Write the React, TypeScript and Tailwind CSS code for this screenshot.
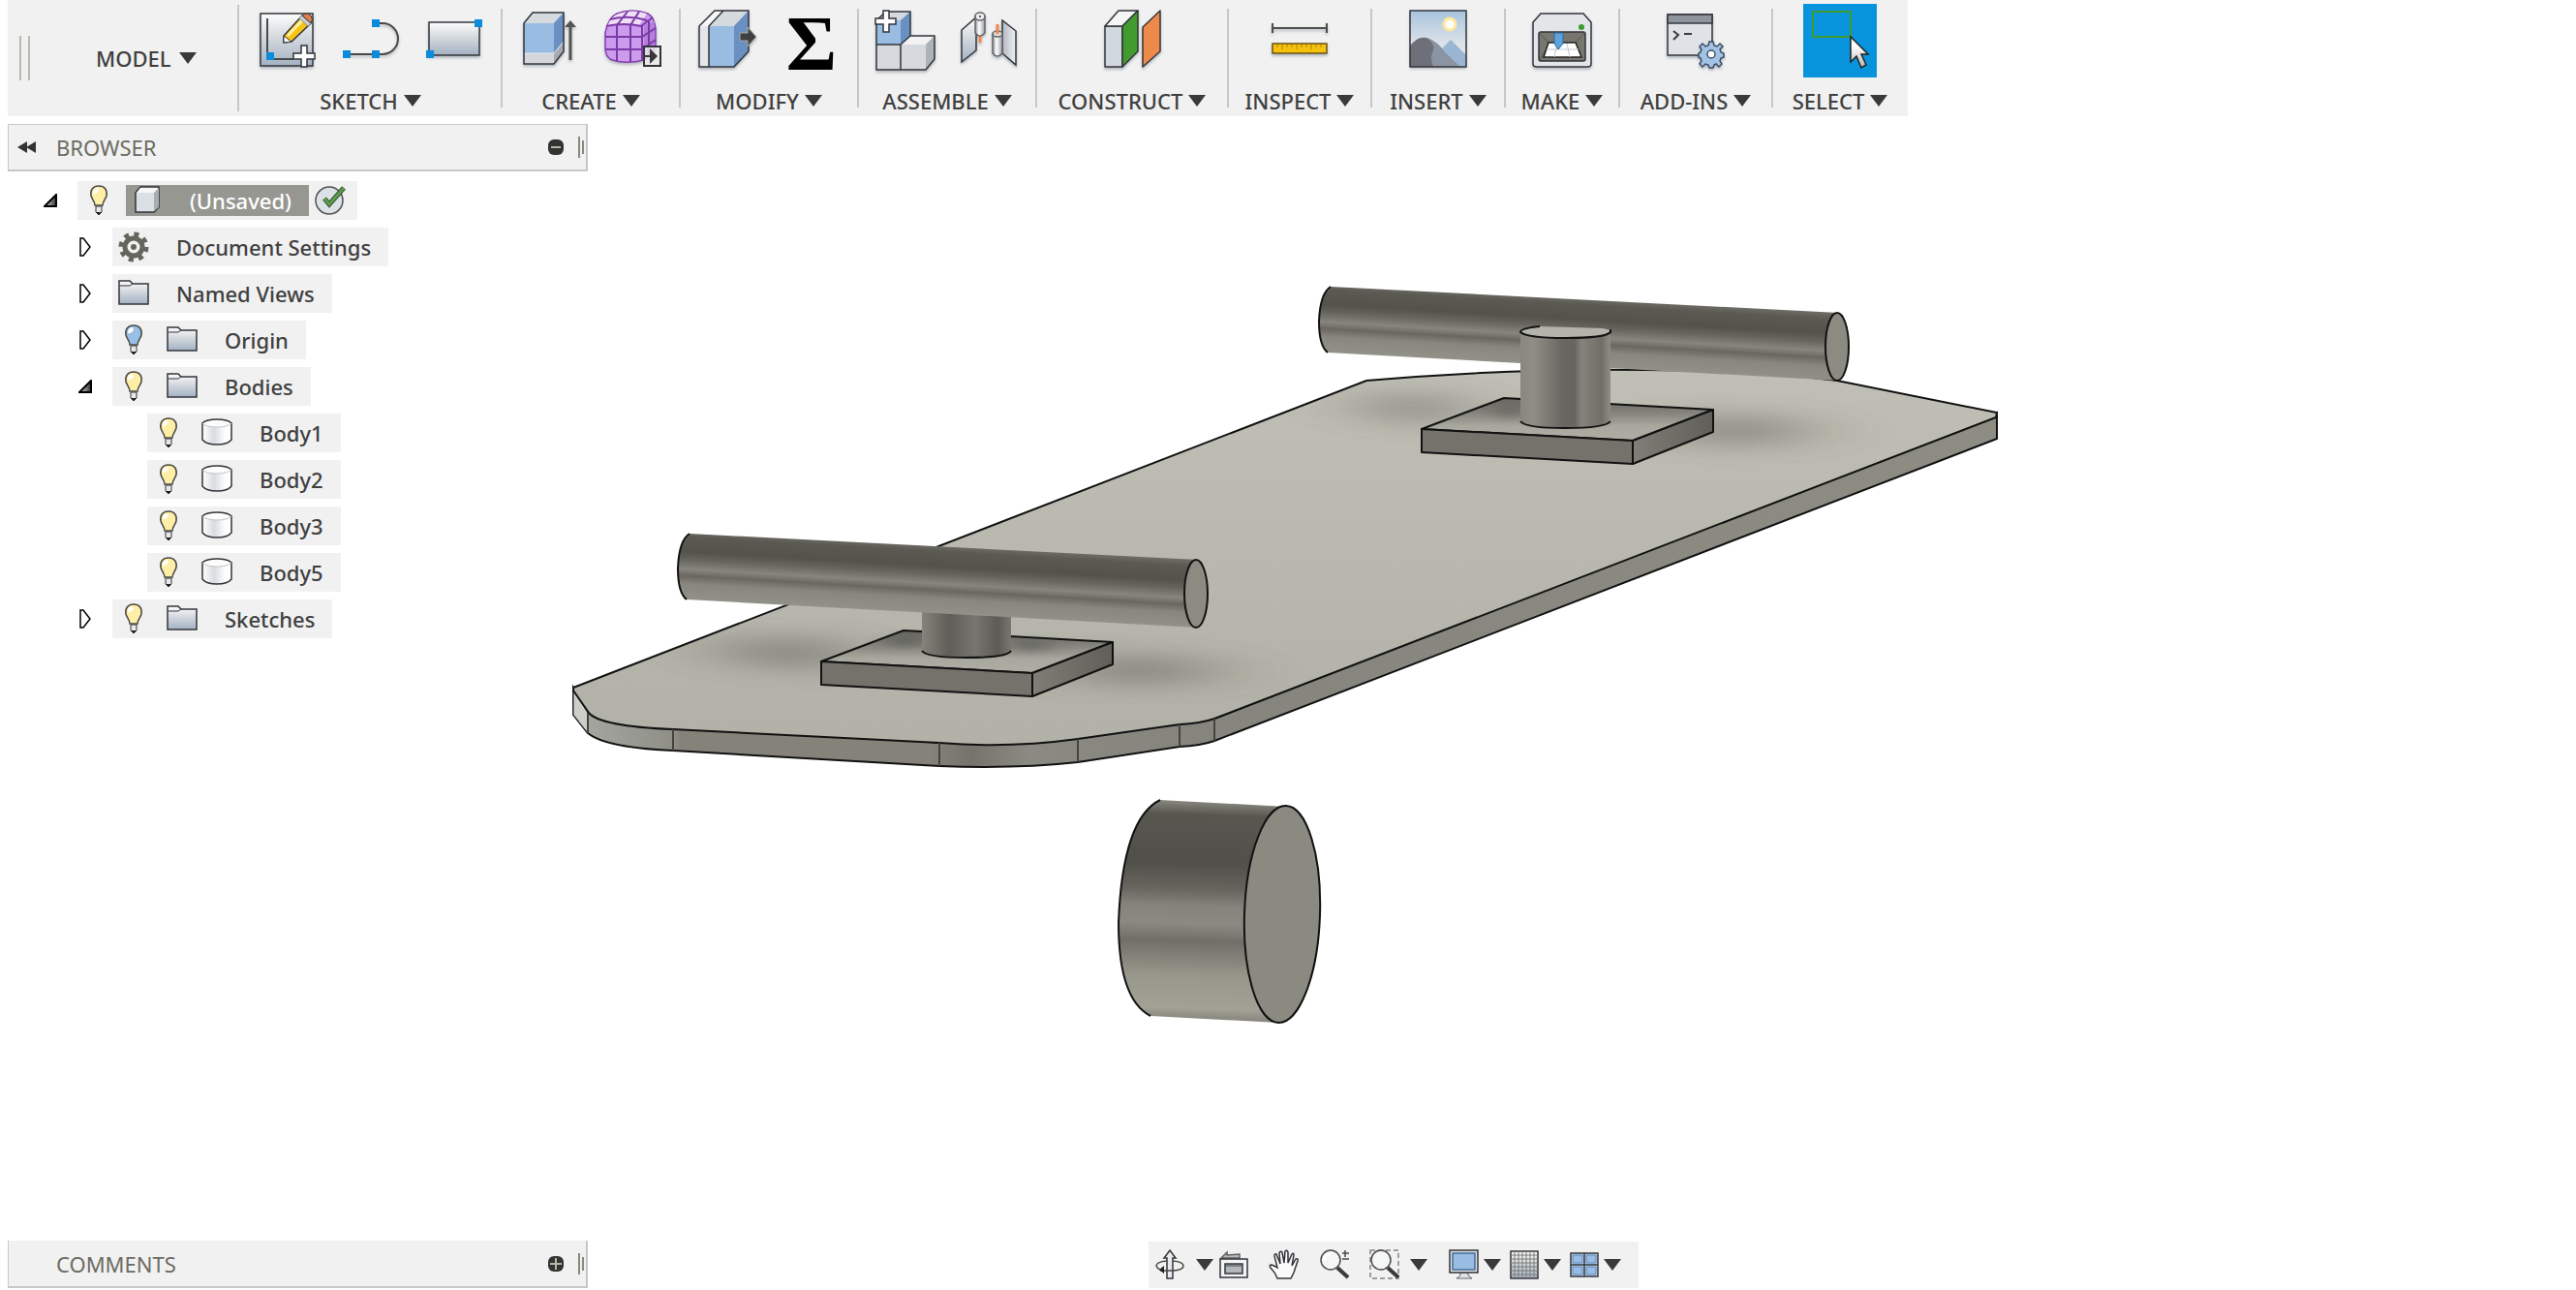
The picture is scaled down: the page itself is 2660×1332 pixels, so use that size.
import React from 'react';

type IconProps = { className?: string };

function Caret() {
  return (
    <svg viewBox="0 0 18 12" className="w-[18px] h-3 shrink-0" aria-hidden="true">
      <path d="M0 0H18L9 12Z" fill="#3a3a3a" />
    </svg>
  );
}

function Icon({ children }: { children: React.ReactNode }) {
  return (
    <svg viewBox="0 0 64 64" className="w-16 h-16 overflow-visible" aria-hidden="true">
      {children}
    </svg>
  );
}

function SmallIcon({ children, className = '' }: IconProps & { children: React.ReactNode }) {
  return (
    <svg viewBox="0 0 32 32" className={`w-8 h-8 shrink-0 ${className}`} aria-hidden="true">
      {children}
    </svg>
  );
}

const ink = '#33353a';

/* Toolbar icons */

function SketchIcon() {
  return (
    <Icon>
      <rect x="4" y="4" width="54" height="54" fill="url(#steel)" stroke={ink} strokeWidth="1.5" filter="url(#drop)" />
      <path d="M11 9V51H38" fill="none" stroke="#4a4a46" strokeWidth="2" />
      <rect x="10" y="44" width="8" height="8" fill="#0a8bdc" />
      <path d="M28 34V27L47 6L56 14L36 33Z" fill="#f6c415" stroke={ink} strokeWidth="1.5" />
      <path d="M32 27L48 10" stroke="#fff0a8" strokeWidth="3" />
      <path d="M28 34V27L36 33Z" fill="#fff" stroke={ink} />
      <path d="M44 9L53 17L56 14L47 6Z" fill="#c9cdd1" stroke="#8b8f94" />
      <path d="M47 6Q52 2 56 6Q59 10 56 14Z" fill="#e0804d" stroke={ink} />
      <path d="M46 37H52V45H60V51H52V59H46V51H38V45H46Z" fill="#fff" stroke={ink} strokeWidth="1.5" />
    </Icon>
  );
}

function LineIcon() {
  return (
    <Icon>
      <path d="M37 14H44A16 16 0 0 1 44 46H7" fill="none" stroke="#4a4a46" strokeWidth="2" filter="url(#drop)" />
      <rect x="33" y="10" width="8" height="8" fill="#0a8bdc" />
      <rect x="33" y="42" width="8" height="8" fill="#0a8bdc" />
      <rect x="3" y="42" width="8" height="8" fill="#0a8bdc" />
    </Icon>
  );
}

function RectangleIcon() {
  return (
    <Icon>
      <rect x="6" y="13" width="52" height="34" fill="url(#steel)" stroke={ink} strokeWidth="1.5" filter="url(#drop)" />
      <rect x="53" y="10" width="8" height="8" fill="#0a8bdc" />
      <rect x="3" y="42" width="8" height="8" fill="#0a8bdc" />
    </Icon>
  );
}

function ExtrudeIcon() {
  return (
    <Icon>
      <g filter="url(#drop)">
        <path d="M6 14L15 3H47L37 14Z" fill="#d4dade" />
        <rect x="6" y="14" width="31" height="31" fill="#98bce2" />
        <rect x="6" y="45" width="31" height="11" fill="#d3d7dc" />
        <path d="M37 14L47 3V33L37 45Z" fill="#6990c0" />
        <path d="M37 45L47 33V43L37 56Z" fill="#a7abb1" />
        <path d="M6 45H37L47 33" fill="none" stroke="#e8ebee" />
        <path d="M6 14L15 3H47V43L37 56H6Z" fill="none" stroke={ink} strokeWidth="1.5" />
        <path d="M54 52V17" stroke="#55554f" strokeWidth="3" />
        <path d="M48 18L54 11L60 18Z" fill="#55554f" />
      </g>
    </Icon>
  );
}

function FormIcon() {
  return (
    <Icon>
      <path d="M4 24Q7 8 16 4Q32 -2 48 4Q55 8 56 20V38Q52 46 44 52Q24 57 9 51Q4 47 4 40Z" fill="#cc9bee" stroke="#8640ae" strokeWidth="1.5" filter="url(#drop)" />
      <path d="M6 18Q9 7 18 4Q32 -1 47 4L39 16Q20 14 6 18Z" fill="#efe0f8" />
      <path d="M44 16L55 12V38L44 51Z" fill="#b67fdc" />
      <path d="M5 17Q24 13 41 17L53 8M4 28H42L56 19M4 41H42L56 31M16 53V16L27 2M30 54V16L39 2M42 52V17M49 47V12M9 10Q28 5 47 11" fill="none" stroke="#7b3aa5" strokeWidth="2" />
      <rect x="44" y="38" width="17" height="20" fill="#e9e7ea" fillOpacity="0.85" stroke={ink} strokeWidth="2" />
      <path d="M43 48H52" stroke="#383838" strokeWidth="2" />
      <path d="M50 40L58 48L50 56Z" fill="#383838" />
    </Icon>
  );
}

function PressPullIcon() {
  return (
    <Icon>
      <g filter="url(#drop)">
        <path d="M3 17L19 1H54L39 17Z" fill="#d4dade" />
        <path d="M3 17L19 1H29L13 17Z" fill="#f7f7f7" />
        <rect x="3" y="17" width="11" height="42" fill="#e4e7ea" />
        <rect x="13" y="17" width="26" height="42" fill="#98bce2" />
        <path d="M39 17L54 1V43L39 59Z" fill="#6990c0" />
        <path d="M13 59V17L28 1M3 17L19 1H54V43L39 59H3Z" fill="none" stroke={ink} strokeWidth="1.5" />
        <path d="M45 24H53V18L62 28L53 38V32H45Z" fill="#404040" stroke="#aaa9a0" strokeWidth="1" />
      </g>
    </Icon>
  );
}

function SigmaIcon() {
  return (
    <Icon>
      <text x="33" y="62" textAnchor="middle" className="font-['Liberation_Serif',serif] text-[80px] font-bold" fill="#000">
        Σ
      </text>
    </Icon>
  );
}

function ComponentIcon() {
  return (
    <Icon>
      <g filter="url(#drop)">
        <rect x="2" y="11" width="25" height="25" fill="#98bce2" />
        <path d="M2 11L12 2H37L27 11Z" fill="#d4dade" />
        <path d="M27 11L37 2V27L27 36Z" fill="#6990c0" />
        <rect x="2" y="36" width="51" height="26" fill="#d6d9de" />
        <path d="M27 36L37 27H62L53 36Z" fill="#f2f2f2" />
        <path d="M53 36L62 27V51L53 62Z" fill="#aeb3b9" />
        <path d="M2 11L12 2H37V27H62V51L53 62H2ZM2 36H27L37 27M27 36V62" fill="none" stroke={ink} strokeWidth="1.5" />
      </g>
      <path d="M9 1H15V9H22V15H15V23H9V15H1V9H9Z" fill="#fff" stroke={ink} strokeWidth="1.5" />
    </Icon>
  );
}

function JointIcon() {
  return (
    <Icon>
      <g filter="url(#drop)" stroke={ink} strokeWidth="1.5">
        <path d="M4 21L19 8V42L4 54Z" fill="url(#steel)" />
        <path d="M60 22L46 11V45L60 57Z" fill="url(#steelSide)" />
        <path d="M23 26V34" stroke="#f08a4b" strokeWidth="3" />
        <path d="M18 7V24Q23 30 28 24V7Z" fill="url(#tube)" stroke="#65676b" />
        <ellipse cx="23" cy="7" rx="5" ry="4" fill="#eee" stroke="#65676b" />
        <path d="M36 25V45Q41 51 46 45V25Z" fill="url(#tube)" stroke="#65676b" />
        <ellipse cx="41" cy="25" rx="5" ry="3" fill="#ddd" stroke="#65676b" />
        <path d="M41 15V25" stroke="#f08a4b" strokeWidth="3" />
      </g>
      <circle cx="23" cy="7" r="1" fill="#333" />
    </Icon>
  );
}

function PlaneIcon() {
  return (
    <Icon>
      <g filter="url(#drop)" strokeWidth="1.5" stroke={ink} strokeLinejoin="round">
        <rect x="4" y="17" width="18" height="42" fill="#d2d8df" />
        <path d="M4 17L18 1H38L22 17Z" fill="#f5f5f5" />
        <path d="M22 17L38 1V43L22 59Z" fill="#439b2e" />
        <path d="M43 18L61 1V43L43 59Z" fill="#ee8a4a" />
      </g>
    </Icon>
  );
}

function MeasureIcon() {
  return (
    <Icon>
      <g filter="url(#drop)">
        <path d="M4 19H60M4 14V24M60 14V24" stroke="#4d4d49" strokeWidth="2" />
        <rect x="4" y="35" width="56" height="10" fill="#f5c211" stroke="#6b5410" strokeWidth="1.5" />
      </g>
      <path d="M9 36V39M14 36V41M19 36V39M24 36V39M29 36V41M34 36V39M39 36V39M44 36V41M49 36V39M54 36V39" stroke="#a88212" />
    </Icon>
  );
}

function ImageIcon() {
  return (
    <Icon>
      <rect x="3" y="1" width="58" height="58" fill="url(#sky)" filter="url(#drop)" />
      <circle cx="44" cy="15" r="6" fill="#fff" stroke="#ffe89a" strokeWidth="3" />
      <path d="M34 42L45 31L61 47V59H40Z" fill="#9bb6d2" />
      <path d="M3 37Q12 27 21 29Q32 33 39 44L55 59H3Z" fill="#8b94a2" />
      <path d="M3 37Q12 27 19 29Q29 33 27 42Q23 49 27 59H3Z" fill="#6d7079" />
      <rect x="3" y="1" width="58" height="58" fill="none" stroke={ink} strokeWidth="1.5" />
    </Icon>
  );
}

function PrintIcon() {
  return (
    <Icon>
      <path d="M2 13L10 4H54L62 13V56Q62 59 58 59H6Q2 59 2 56Z" fill="#e3e6e8" stroke={ink} strokeWidth="1.5" filter="url(#drop)" />
      <rect x="8" y="23" width="48" height="30" rx="2" fill="#77776f" stroke={ink} strokeWidth="1.5" />
      <path d="M8 23L18 34V36L9 52M56 23L46 34" stroke="#55554f" fill="none" />
      <path d="M18 34H46L52 49H13Z" fill="#fff" stroke="#222" strokeWidth="1.5" />
      <path d="M16 41H49M27 35L24 49M37 35L40 49" stroke="#c6c9cc" />
      <path d="M24 24H33V35L28 41L24 35Z" fill="#5fa3dc" stroke="#2a6da8" />
      <circle cx="52" cy="18" r="3" fill="#3f9a2f" />
    </Icon>
  );
}

function ScriptIcon() {
  return (
    <Icon>
      <rect x="3" y="5" width="46" height="42" fill="#dfe3e7" stroke={ink} strokeWidth="1.5" filter="url(#drop)" />
      <rect x="3" y="5" width="46" height="9" fill="#8d949c" stroke={ink} strokeWidth="1.5" />
      <path d="M9 22L14 26L9 31M20 25H28" fill="none" stroke="#3c3c3c" strokeWidth="2" />
      <g stroke="#3d4d61" strokeWidth="1.5">
        <path
          d="M46 33H50L51 37L54 38L57 35L60 38L57 41L58 44L61 45V49L58 50L57 53L59 56L56 59L53 56L51 57L50 60H46L45 57L42 56L39 59L36 56L38 53L37 50L35 49V45L37 44L38 41L36 38L39 35L42 38L45 37Z"
          fill="#a3c3e6"
          filter="url(#drop)"
        />
        <circle cx="48" cy="46" r="4" fill="#fff" />
      </g>
    </Icon>
  );
}

function SelectIcon() {
  return (
    <svg viewBox="0 0 76 76" className="w-[76px] h-[76px] bg-[#0894dc]" aria-hidden="true">
      <rect x="10" y="8" width="39" height="26" fill="none" stroke="#3f9a2f" strokeWidth="2" />
      <path d="M49 34V60L55 54L60 66L65 63L60 52H67Z" fill="url(#cursor)" stroke="#222" strokeWidth="1.5" />
    </svg>
  );
}

/* Browser tree icons */

function Bulb({ off = false }: { off?: boolean }) {
  return (
    <SmallIcon>
      <path d="M13 22V28L16 31L19 28V22Z" fill="#e8e8e8" stroke={ink} strokeWidth="1" />
      <path d="M13 28H19L16 31Z" fill="#222" />
      <path
        d="M16 1C10 1 7 5 8 11C9 15 12 17 12 21H20C20 17 23 15 24 11C25 5 22 1 16 1Z"
        fill={off ? '#98bfe6' : '#ffeea6'}
        stroke="#4a4a46"
        strokeWidth="1.5"
      />
      <path d="M10 9Q10 3 15 3L16 6Q12 10 10 9Z" fill="#fff" />
    </SmallIcon>
  );
}

function Cube() {
  return (
    <SmallIcon>
      <path d="M4 8L9 2H28V23L23 28H4Z" fill="#dbe0e5" stroke={ink} strokeWidth="1.5" />
      <path d="M23 8L28 3V23L23 27Z" fill="#a6adb5" />
      <path d="M5 8L9 3H27L23 8Z" fill="#f7f7f7" />
    </SmallIcon>
  );
}

function Gear() {
  return (
    <SmallIcon>
      <circle cx="16" cy="16" r="13" fill="none" stroke="#65655e" strokeWidth="5" strokeDasharray="5 5.2" />
      <circle cx="16" cy="16" r="9" fill="none" stroke="#65655e" strokeWidth="5" />
      <circle cx="16" cy="16" r="3" fill="#65655e" />
    </SmallIcon>
  );
}

function Folder() {
  return (
    <SmallIcon>
      <path d="M1 3H12L15 6H31V27H1Z" fill="url(#steel)" stroke={ink} strokeWidth="1.5" />
      <path d="M2 8H12L15 6" fill="none" stroke={ink} strokeWidth="1" />
    </SmallIcon>
  );
}

function Cylinder() {
  return (
    <SmallIcon>
      <path d="M1 6V23Q5 28 16 28Q27 28 31 23V6Z" fill="url(#tubeWhite)" stroke={ink} strokeWidth="1.5" />
      <path d="M1 6Q5 2 16 2Q27 2 31 6Q27 10 16 10Q5 10 1 6Z" fill="#fcfcfc" />
      <path d="M1 6Q5 2 16 2Q27 2 31 6" fill="none" stroke={ink} strokeWidth="1.5" />
      <path d="M1 6Q5 10 16 10Q27 10 31 6" fill="none" stroke="#c3c6ca" />
    </SmallIcon>
  );
}

function CheckBadge() {
  return (
    <SmallIcon>
      <circle cx="15" cy="16" r="14" fill="#dde2e8" stroke="#50524f" strokeWidth="1.5" />
      <path d="M10 14L15 20L30 3" fill="none" stroke="#3b4a34" strokeWidth="5" />
      <path d="M10 14L15 20L30 3" fill="none" stroke="#5aa04c" strokeWidth="3" />
    </SmallIcon>
  );
}

const toolbar = [
  { label: 'SKETCH', width: 'w-[271px]', icons: [SketchIcon, LineIcon, RectangleIcon] },
  { label: 'CREATE', width: 'w-[184px]', icons: [ExtrudeIcon, FormIcon] },
  { label: 'MODIFY', width: 'w-[184px]', icons: [PressPullIcon, SigmaIcon] },
  { label: 'ASSEMBLE', width: 'w-[184px]', icons: [ComponentIcon, JointIcon] },
  { label: 'CONSTRUCT', width: 'w-[198px]', icons: [PlaneIcon] },
  { label: 'INSPECT', width: 'w-[148px]', icons: [MeasureIcon] },
  { label: 'INSERT', width: 'w-[138px]', icons: [ImageIcon] },
  { label: 'MAKE', width: 'w-[118px]', icons: [PrintIcon] },
  { label: 'ADD-INS', width: 'w-[158px]', icons: [ScriptIcon] },
  { label: 'SELECT', width: 'w-[140px]', icons: [SelectIcon] }
];

function Toolbar() {
  return (
    <header className="flex w-fit h-[120px] bg-[#f1f1f1] text-[#404040]">
      <div className="flex items-center w-[237px] pl-3">
        <div className="w-[11px] h-[46px] border-x-2 border-[#b9b9ac]" />
        <button className="flex items-center gap-2 ml-[68px]">
          MODEL <Caret />
        </button>
      </div>
      <div className="w-[2px] h-[110px] self-center bg-[#c6c7cb]" />
      {toolbar.map((group, index) => (
        <React.Fragment key={group.label}>
          {index > 0 && <div className="w-[2px] -mx-px h-[102px] self-center bg-[#c6c7cb]" />}
          <div className={`flex flex-col items-center pt-1 ${group.width}`}>
            <div className="flex items-center gap-[22px] h-[76px]">
              {group.icons.map((ToolIcon, i) => (
                <button key={i} aria-label={`${group.label} tool ${i + 1}`}>
                  <ToolIcon />
                </button>
              ))}
            </div>
            <button className="flex items-center gap-1.5 mt-2.5">
              {group.label} <Caret />
            </button>
          </div>
        </React.Fragment>
      ))}
    </header>
  );
}

function PanelHeader({ title, collapsed = false }: { title: string; collapsed?: boolean }) {
  return (
    <div
      className={`flex items-center w-[599px] h-[49px] pl-[9px] pr-0.5 bg-[#f1f1f1] text-[#6b6b62] border-l border-r-2 border-b-2 border-[#c6c7cb] ${
        collapsed ? '' : 'border-t'
      }`}
    >
      <div className="flex items-center w-10">
        {!collapsed && (
          <svg viewBox="0 0 20 12" className="w-5 h-3" aria-hidden="true">
            <path d="M0 6L10 0V12ZM9 6L19 0V12Z" fill="#333" />
          </svg>
        )}
      </div>
      <h2 className="font-normal">{title}</h2>
      <button className="ml-auto" aria-label={collapsed ? 'Expand' : 'Collapse'}>
        <svg viewBox="0 0 16 16" className="w-4 h-4">
          <rect width="16" height="16" rx="6" fill="#333330" />
          <path d={collapsed ? 'M2 8H14M8 2V14' : 'M3 8H13'} stroke="#b5b5a8" strokeWidth="2" />
        </svg>
      </button>
      <div className="flex items-center gap-0.5 ml-[15px]">
        <div className="w-[2px] h-[22px] bg-[#88887f]" />
        <div className="w-[2px] h-[14px] bg-[#88887f]" />
      </div>
    </div>
  );
}

function Expander({ open }: { open: boolean }) {
  return (
    <button className="w-9 h-10 flex items-center pl-px" aria-label={open ? 'Collapse' : 'Expand'}>
      {open ? (
        <svg viewBox="0 0 14 14" className="w-3.5 h-3.5">
          <path d="M1 13L13 1V13Z" fill="url(#wedge)" stroke="#000" strokeWidth="2" />
        </svg>
      ) : (
        <svg viewBox="0 0 14 20" className="w-3.5 h-5">
          <path d="M2 1H5L12 10L5 19H2Z" fill="#fff" stroke="#000" strokeWidth="1.5" />
        </svg>
      )}
    </button>
  );
}

type NodeProps = {
  label: string;
  open?: boolean;
  icons: React.ReactNode;
  children?: React.ReactNode;
};

function TreeNode({ label, open, icons, children }: NodeProps) {
  return (
    <li>
      <div className="flex">
        {open === undefined ? <div className="w-9" /> : <Expander open={open} />}
        <div className="flex items-center h-10 pl-1.5 pr-[18px] bg-[#f1f1f1]">
          <div className="flex gap-[18px] mr-7">{icons}</div>
          <span>{label}</span>
        </div>
      </div>
      {children}
    </li>
  );
}

function BrowserTree() {
  return (
    <ul className="mt-2.5 pl-9 text-[#404040]">
      <li>
        <div className="flex">
          <Expander open />
          <div className="flex items-center h-10 pl-1.5 pr-3 bg-[#f1f1f1]">
            <Bulb />
            <div className="flex items-center h-8 ml-3 mr-1.5 pl-1.5 pr-[18px] bg-[#979792] text-white">
              <Cube />
              <span className="ml-7">(Unsaved)</span>
            </div>
            <CheckBadge />
          </div>
        </div>
        <ul className="flex flex-col gap-2 mt-2 pl-9">
          <TreeNode label="Document Settings" open={false} icons={<Gear />} />
          <TreeNode label="Named Views" open={false} icons={<Folder />} />
          <TreeNode label="Origin" open={false} icons={<><Bulb off /><Folder /></>} />
          <TreeNode label="Bodies" open icons={<><Bulb /><Folder /></>}>
            <ul className="flex flex-col gap-2 mt-2 pl-9">
              {['Body1', 'Body2', 'Body3', 'Body5'].map((body) => (
                <TreeNode key={body} label={body} icons={<><Bulb /><Cylinder /></>} />
              ))}
            </ul>
          </TreeNode>
          <TreeNode label="Sketches" open={false} icons={<><Bulb /><Folder /></>} />
        </ul>
      </li>
    </ul>
  );
}

function NavigationBar() {
  return (
    <nav className="flex items-center h-12 pl-[7px] pr-[18px] bg-[#f1f1f1]">
      <button className="flex items-center gap-2.5" aria-label="Orbit">
        <SmallIcon>
          <path d="M12 30V9H9L15 1L21 9H18V30Z" fill="#e6eaed" stroke={ink} strokeWidth="1.5" />
          <path d="M18 12Q29 13 29 17Q29 22 15 22H5M12 12Q1 13 1 17Q2 20 5 21" fill="none" stroke="#4a4a46" strokeWidth="1.5" />
          <path d="M4 21L9 17V25Z" fill="#222" />
        </SmallIcon>
        <Caret />
      </button>
      <button className="ml-[5px]" aria-label="Look at">
        <SmallIcon>
          <path d="M3 9L9 3V6L22 5V9Z" fill="#b8bab9" stroke="#62625c" strokeWidth="1.5" />
          <rect x="2" y="10" width="28" height="19" fill="#f2f4f5" stroke={ink} strokeWidth="1.5" />
          <rect x="7" y="15" width="18" height="10" fill="#b2b8bd" stroke={ink} strokeWidth="1.5" />
          <path d="M8 17H24" stroke="#7d8186" strokeWidth="2" />
        </SmallIcon>
      </button>
      <button className="ml-5" aria-label="Pan">
        <SmallIcon>
          <path
            d="M9 30Q7 24 2 19Q0 16 3 16Q6 17 9 19L6 7Q6 4 8 5L12 15L11 4Q12 1 14 3L16 14L17 2Q19 0 20 3V14L24 5Q26 3 26 6L24 17L28 10Q31 9 30 12L26 24L23 30Z"
            fill="#fafafa"
            stroke={ink}
            strokeWidth="1.5"
          />
        </SmallIcon>
      </button>
      <button className="ml-5" aria-label="Zoom">
        <SmallIcon>
          <path d="M19 19L30 29" stroke="#3a3a3a" strokeWidth="4" />
          <circle cx="12" cy="11" r="10" fill="#f4f6f7" stroke="#4a4a46" strokeWidth="1.5" />
          <path d="M5 11Q6 5 12 5" fill="none" stroke="#fff" strokeWidth="3" />
          <path d="M24 4H31M27 1V8M24 10H31" stroke="#4a4a46" strokeWidth="1.5" />
        </SmallIcon>
      </button>
      <button className="flex items-center gap-2.5 ml-5" aria-label="Zoom window">
        <SmallIcon>
          <rect x="1" y="1" width="29" height="29" fill="none" stroke="#85857c" strokeWidth="1.5" strokeDasharray="5 3" />
          <path d="M19 19L30 29" stroke="#3a3a3a" strokeWidth="4" />
          <circle cx="12" cy="11" r="10" fill="#f4f6f7" stroke="#4a4a46" strokeWidth="1.5" />
        </SmallIcon>
        <Caret />
      </button>
      <button className="flex items-center gap-1 ml-[22px]" aria-label="Display settings">
        <SmallIcon>
          <path d="M12 24H20V27L24 30H8L12 27Z" fill="#dfe3e6" stroke="#62666a" />
          <rect x="1" y="1" width="29" height="23" fill="#dfe3e6" stroke={ink} strokeWidth="1.5" />
          <rect x="4" y="4" width="23" height="17" fill="#98bce2" stroke="#466a96" strokeWidth="1.5" />
        </SmallIcon>
        <Caret />
      </button>
      <button className="flex items-center gap-1 ml-2" aria-label="Grid and snaps">
        <SmallIcon>
          <rect x="2" y="2" width="28" height="28" fill="url(#steel)" stroke={ink} strokeWidth="1.5" />
          <path d="M6 2V30M10 2V30M14 2V30M18 2V30M22 2V30M26 2V30M2 6H30M2 10H30M2 14H30M2 18H30M2 22H30M2 26H30" stroke="#7b7b76" strokeWidth="1" />
        </SmallIcon>
        <Caret />
      </button>
      <button className="flex items-center gap-1 ml-2" aria-label="Viewports">
        <SmallIcon>
          <rect x="2" y="4" width="28" height="24" fill="#c8dcf1" stroke={ink} strokeWidth="1.5" />
          <path d="M4 6H14V14H4ZM18 6H28V14H18ZM4 18H14V26H4ZM18 18H28V26H18Z" fill="#98bce2" stroke="#5c88bb" />
          <path d="M16 4V28M2 16H30" stroke={ink} strokeWidth="1.5" />
        </SmallIcon>
        <Caret />
      </button>
    </nav>
  );
}

/* Model canvas */

const metalStops = (
  <>
    <stop offset="0" stopColor="#6b6a63" />
    <stop offset="0.08" stopColor="#5a5952" />
    <stop offset="0.3" stopColor="#53524b" />
    <stop offset="0.42" stopColor="#66655e" />
    <stop offset="0.56" stopColor="#87867e" />
    <stop offset="0.66" stopColor="#6a6761" />
    <stop offset="0.78" stopColor="#88867d" />
    <stop offset="1" stopColor="#929187" />
  </>
);

function Axle() {
  return (
    <g>
      <path d="M712 551L1237 578V648L709 619Q700 612 700 587Q701 558 712 551Z" fill="url(#axle)" />
      <path d="M712 551Q701 558 700 587Q700 612 709 619" fill="none" stroke="#111" strokeWidth="2" />
      <ellipse cx="1235" cy="613" rx="12" ry="35" fill="#8b8b82" stroke="#111" strokeWidth="2" />
    </g>
  );
}

function Plate() {
  return (
    <g stroke="#111" strokeWidth="2" strokeLinejoin="round">
      <path d="M848 683L933 651L1149 663L1066 695Z" fill="url(#plateTop)" />
      <path d="M848 683L1066 695V719L848 707Z" fill="#74726b" />
      <path d="M1066 695L1149 663V686L1066 719Z" fill="url(#plateSide)" />
    </g>
  );
}

function Scene() {
  return (
    <svg viewBox="0 0 2660 1332" preserveAspectRatio="xMinYMin meet" className="col-start-1 row-start-1 w-full" role="img" aria-label="Skateboard model">
      <defs>
        <linearGradient id="steel" x2="0" y2="1">
          <stop offset="0" stopColor="#fdfdfd" />
          <stop offset="0.4" stopColor="#d9dde2" />
          <stop offset="1" stopColor="#a3b1c3" />
        </linearGradient>
        <linearGradient id="steelSide">
          <stop offset="0" stopColor="#b2b8bf" />
          <stop offset="1" stopColor="#f0f2f4" />
        </linearGradient>
        <linearGradient id="tube">
          <stop offset="0" stopColor="#8e9399" />
          <stop offset="0.4" stopColor="#fff" />
          <stop offset="1" stopColor="#9b9fa4" />
        </linearGradient>
        <linearGradient id="tubeWhite">
          <stop offset="0" stopColor="#fff" />
          <stop offset="0.4" stopColor="#d7dce1" />
          <stop offset="0.8" stopColor="#fff" />
        </linearGradient>
        <linearGradient id="sky" x2="0" y2="1">
          <stop offset="0" stopColor="#a8c4df" />
          <stop offset="0.6" stopColor="#dde3e8" />
        </linearGradient>
        <linearGradient id="cursor" x2="0" y2="1">
          <stop offset="0.3" stopColor="#fff" />
          <stop offset="1" stopColor="#b5b5b5" />
        </linearGradient>
        <linearGradient id="wedge">
          <stop offset="0" stopColor="#ddd" />
          <stop offset="1" stopColor="#333" />
        </linearGradient>
        <filter id="drop" x="-20%" y="-20%" width="140%" height="150%">
          <feDropShadow dx="0" dy="2" stdDeviation="1.5" floodColor="#5b6b7a" floodOpacity="0.45" />
        </filter>
        <filter id="soft" x="-50%" y="-200%" width="200%" height="500%">
          <feGaussianBlur stdDeviation="44 13" />
        </filter>
        <filter id="softSmall" x="-50%" y="-100%" width="200%" height="300%">
          <feGaussianBlur stdDeviation="12 5" />
        </filter>
        <linearGradient id="board" gradientUnits="userSpaceOnUse" x1="1000" y1="380" x2="1000" y2="770">
          <stop offset="0" stopColor="#bfbfb5" />
          <stop offset="1" stopColor="#b1b1a7" />
        </linearGradient>
        <linearGradient id="rim" gradientUnits="userSpaceOnUse" x1="592" y1="0" x2="2062" y2="0">
          <stop offset="0.01" stopColor="#a5a59f" />
          <stop offset="0.07" stopColor="#8f8f88" />
          <stop offset="0.075" stopColor="#85827a" />
          <stop offset="0.25" stopColor="#85827a" />
          <stop offset="0.28" stopColor="#75736c" />
          <stop offset="0.32" stopColor="#8a8a83" />
          <stop offset="0.44" stopColor="#85857e" />
          <stop offset="1" stopColor="#8d8d83" />
        </linearGradient>
        <linearGradient id="axle" gradientUnits="userSpaceOnUse" x1="971" y1="564" x2="967" y2="633">
          {metalStops}
        </linearGradient>
        <linearGradient id="wheel" gradientUnits="userSpaceOnUse" x1="1250" y1="828" x2="1243" y2="1053">
          <stop offset="0" stopColor="#88877e" />
          <stop offset="0.06" stopColor="#57564f" />
          <stop offset="0.28" stopColor="#504f49" />
          <stop offset="0.4" stopColor="#65645d" />
          <stop offset="0.48" stopColor="#85837c" />
          <stop offset="0.56" stopColor="#8a8a82" />
          <stop offset="0.64" stopColor="#716e68" />
          <stop offset="0.8" stopColor="#98978b" />
          <stop offset="0.95" stopColor="#a3a195" />
          <stop offset="1" stopColor="#86857c" />
        </linearGradient>
        <linearGradient id="stem">
          <stop offset="0" stopColor="#88887f" />
          <stop offset="0.15" stopColor="#8f8e85" />
          <stop offset="0.45" stopColor="#6a6863" />
          <stop offset="0.6" stopColor="#66645e" />
          <stop offset="0.68" stopColor="#85837b" />
          <stop offset="0.9" stopColor="#706e67" />
          <stop offset="1" stopColor="#8f8e85" />
        </linearGradient>
        <linearGradient id="stemDark">
          <stop offset="0" stopColor="#85847b" />
          <stop offset="0.3" stopColor="#5f5e58" />
          <stop offset="0.6" stopColor="#77756e" />
          <stop offset="0.85" stopColor="#5b5a54" />
          <stop offset="1" stopColor="#77766f" />
        </linearGradient>
        <linearGradient id="plateTop" x2="0" y2="1">
          <stop offset="0" stopColor="#66655f" />
          <stop offset="0.35" stopColor="#85847c" />
          <stop offset="0.65" stopColor="#a7a79d" />
          <stop offset="1" stopColor="#aeaea4" />
        </linearGradient>
        <linearGradient id="plateSide">
          <stop offset="0" stopColor="#807e76" />
          <stop offset="1" stopColor="#5f5e58" />
        </linearGradient>
        <clipPath id="boardClip">
          <path d="M592 710L1411 393Q1560 380 1700 382Q1810 382 1897 393L2062 426L2061 431L1254 742Q1240 747 1218 748L1113 763Q1040 773 970 767L695 753Q620 750 608 736L592 713Z" />
        </clipPath>
      </defs>

      {/* Deck */}
      <path
        d="M592 710V738L607 757Q625 772 695 775L970 791Q1050 794 1113 787L1218 771Q1240 770 1254 765L2062 453V426L1254 742L1218 748L970 767L608 736Z"
        fill="url(#rim)"
        stroke="#111"
        strokeWidth="2"
      />
      <path d="M592 712V738L607 757V736Z" fill="#cfcfca" stroke="#333" />
      <path
        d="M592 710L1411 393Q1560 380 1700 382Q1810 382 1897 393L2062 426L2061 431L1254 742Q1240 747 1218 748L1113 763Q1040 773 970 767L695 753Q620 750 608 736L592 713Z"
        fill="url(#board)"
        stroke="#111"
        strokeWidth="2"
      />
      <path d="M607 736V757M695 753V775M970 767V791M1113 763V787M1218 748V771M1254 742V765" stroke="#44433e" strokeWidth="2" />
      <g clipPath="url(#boardClip)">
        <g filter="url(#soft)" fill="#5d5c56" opacity="0.8">
          <path d="M720 664L870 664L870 690L760 678Z" />
          <path d="M1120 678L1270 690L1240 700L1110 702Z" />
          <path d="M1400 412L1500 412L1500 436L1420 426Z" />
          <path d="M1740 430L1880 442L1850 452L1740 456Z" />
        </g>
      </g>

      {/* Rear truck */}
      <g transform="translate(662 -255)">
        <Axle />
      </g>
      <g transform="translate(620 -240)">
        <Plate />
      </g>
      <ellipse cx="1560" cy="425" rx="16" ry="5" fill="#4b4a46" opacity="0.6" filter="url(#softSmall)" />
      <path d="M1570 342V435Q1575 442 1616 442Q1658 442 1663 435V342Z" fill="url(#stem)" />
      <path d="M1570 435Q1575 442 1616 442Q1658 442 1663 435" fill="none" stroke="#111" strokeWidth="2" />
      <path d="M1590 337L1570 341Q1575 349 1616 349Q1658 349 1663 341L1655 339Z" fill="#b3b3a9" />
      <path d="M1590 337Q1570 339 1570 343Q1577 349 1616 349Q1658 349 1663 343V340" fill="none" stroke="#111" strokeWidth="2" />

      {/* Front truck */}
      <Plate />
      <g fill="#3c3d40" opacity="0.6" filter="url(#softSmall)">
        <ellipse cx="935" cy="663" rx="20" ry="4" />
        <ellipse cx="1065" cy="667" rx="22" ry="4" />
      </g>
      <path d="M952 620V672Q957 679 998 679Q1040 679 1044 672V620Z" fill="url(#stemDark)" />
      <path d="M952 672Q957 679 998 679Q1040 679 1044 672" fill="none" stroke="#111" strokeWidth="2" />
      <Axle />

      {/* Wheel */}
      <path d="M1198 826L1329 833L1320 1056L1188 1049Q1155 1032 1155 953Q1159 845 1198 826Z" fill="url(#wheel)" />
      <path d="M1198 826Q1159 845 1155 953Q1155 1032 1188 1049" fill="none" stroke="#111" strokeWidth="2" />
      <ellipse cx="1324" cy="944" rx="39" ry="112" transform="rotate(2 1324 944)" fill="#8a8a81" stroke="#111" strokeWidth="2" />
    </svg>
  );
}

export default function App() {
  return (
    <div className="grid min-h-screen bg-white font-['Noto_Sans',sans-serif] font-medium text-[22px] leading-7">
      <Scene />
      <div className="relative col-start-1 row-start-1 flex flex-col pl-2">
        <Toolbar />
        <section className="mt-2">
          <PanelHeader title="BROWSER" />
          <BrowserTree />
        </section>
        <footer className="flex items-end mt-auto pb-0.5">
          <PanelHeader title="COMMENTS" collapsed />
          <div className="ml-[579px]">
            <NavigationBar />
          </div>
        </footer>
      </div>
    </div>
  );
}
